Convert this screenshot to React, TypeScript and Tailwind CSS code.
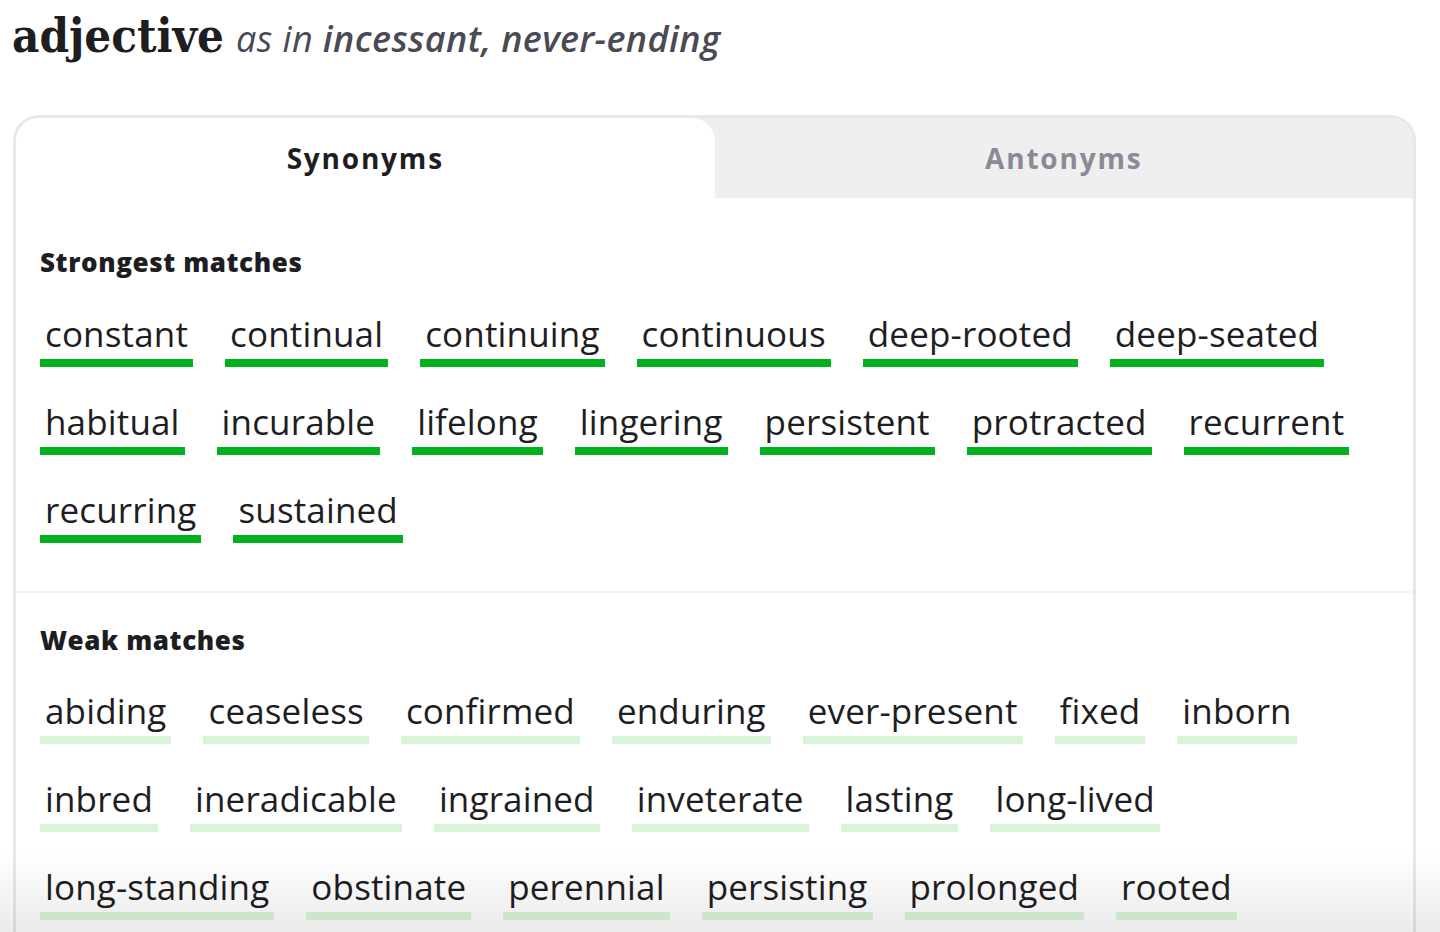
import React from "react";

const strong = [
  "constant", "continual", "continuing", "continuous", "deep-rooted", "deep-seated",
  "habitual", "incurable", "lifelong", "lingering", "persistent", "protracted", "recurrent",
  "recurring", "sustained",
];

const weak = [
  "abiding", "ceaseless", "confirmed", "enduring", "ever-present", "fixed", "inborn",
  "inbred", "ineradicable", "ingrained", "inveterate", "lasting", "long-lived",
  "long-standing", "obstinate", "perennial", "persisting", "prolonged", "rooted",
];

const wordFont = { fontFamily: '"Open Sans", "Noto Sans", sans-serif' };

function Words({ items, strongMatch }: { items: string[]; strongMatch: boolean }) {
  return (
    <div className="flex flex-wrap gap-x-[32px] gap-y-[33px]">
      {items.map((w) => (
        <a
          key={w}
          className={
            "block px-[5px] pb-[3px] text-[35px] leading-[44px] text-[#1e1e22] tracking-[0.15px] border-b-[8px] " +
            (strongMatch ? "border-[#00b21e]" : "border-[#d9f5d9]")
          }
          style={wordFont}
        >
          {w}
        </a>
      ))}
    </div>
  );
}

export default function App() {
  return (
    <div className="relative w-[1440px] h-[932px] overflow-hidden bg-white">
      <div className="pl-[12px] pt-[6px] flex items-baseline gap-[12px] whitespace-nowrap">
        <span
          className="text-[47px] leading-[60px] font-bold text-[#1e1e22]"
          style={{ fontFamily: '"DejaVu Serif Condensed", "DejaVu Serif", serif', fontStretch: "condensed" }}
        >
          adjective
        </span>
        <span
          className="italic text-[36px] tracking-[0.4px] text-[#4a4a55]"
          style={{ fontFamily: '"Open Sans", "Noto Sans", sans-serif' }}
        >
          as in <span className="font-semibold">incessant, never-ending</span>
        </span>
      </div>

      <div className="mt-[49px] ml-[13px] w-[1403px] h-[1000px] rounded-t-[26px] border-[3px] border-[#e8e8ea] bg-[#efefef]">
        <div className="grid grid-cols-2 h-[80px]">
          <div className="bg-white rounded-t-[23px] flex items-center justify-center">
            <span
              className="text-[28px] font-bold text-[#1e1e22] tracking-[1.8px]"
              style={{ fontFamily: '"Open Sans", "Noto Sans", sans-serif' }}
            >
              Synonyms
            </span>
          </div>
          <div className="flex items-center justify-center rounded-tr-[23px]">
            <span
              className="text-[28px] font-bold text-[#8a8a96] tracking-[1.8px]"
              style={{ fontFamily: '"Open Sans", "Noto Sans", sans-serif' }}
            >
              Antonyms
            </span>
          </div>
        </div>
        <div className="bg-white h-full">
          <div className="pl-[24px] pr-[24px] pt-[48px] pb-[48px]">
            <h3
              className="text-[26px] leading-[32px] font-extrabold tracking-[0.6px] text-[#1e1e22] mb-[34px]"
              style={wordFont}
            >
              Strongest matches
            </h3>
            <Words items={strong} strongMatch />
          </div>
          <div className="h-[2px] bg-[#f5f5f5]" />
          <div className="pl-[24px] pr-[24px] pt-[31px]">
            <h3
              className="text-[26px] leading-[32px] font-extrabold tracking-[0.6px] text-[#1e1e22] mb-[33px]"
              style={wordFont}
            >
              Weak matches
            </h3>
            <Words items={weak} strongMatch={false} />
          </div>
        </div>
      </div>

      <div className="pointer-events-none absolute left-0 right-0 bottom-0 h-[80px] bg-gradient-to-b from-transparent to-black/[0.08]" />
    </div>
  );
}
